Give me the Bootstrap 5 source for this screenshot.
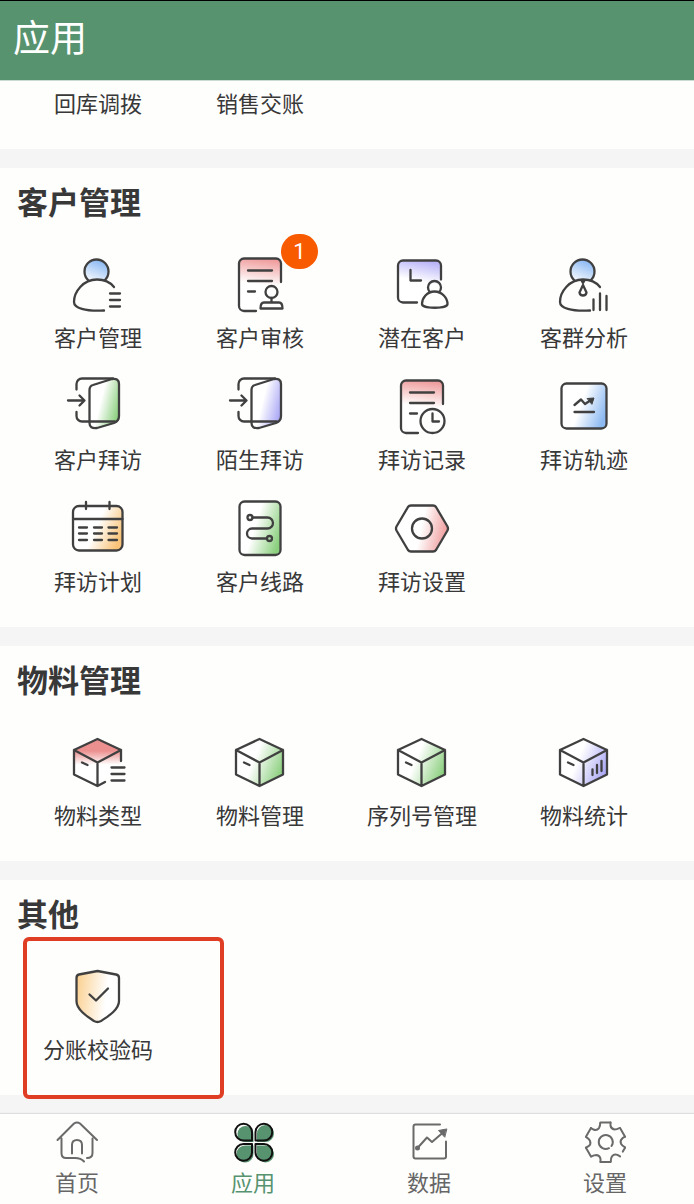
<!DOCTYPE html>
<html lang="zh-CN">
<head>
<meta charset="utf-8">
<meta name="viewport" content="width=device-width, initial-scale=1">
<title>应用</title>
<link href="https://cdn.jsdelivr.net/npm/bootstrap@5.3.0/dist/css/bootstrap.min.css" rel="stylesheet">
<style>
  body { font-family: Roboto, "Noto Sans CJK SC", sans-serif; background: #f5f5f5; color: #383838; }
  .app-header { background: #57936f; border-top: 1px solid #000; border-bottom: 1px solid #c9dcd1; height: 81px; padding: 0 13px 2px; }
  .app-header h1 { font-size: 37px; line-height: 48px; font-weight: 400; }
  .panel { background: #fefefd; padding: 12px 29px 5px 17px; margin-bottom: 19px; }
  .panel-cut { padding-top: 8px; }
  .panel h2 { font-size: 31px; line-height: 48px; font-weight: 700; margin: 0 0 28px; }
  .tile { color: #383838; margin-bottom: 23px; }
  .tile-icon { width: 60px; height: 60px; margin-bottom: 7px; }
  .tile-label { font-size: 22px; line-height: 32px; white-space: nowrap; }
  svg { display: block; overflow: visible; }
  .ico { width: 60px; height: 60px; fill: none; stroke: #404040; stroke-width: 2.3; stroke-linecap: round; stroke-linejoin: round; }
  .count { top: -22px; left: 51px; width: 37px; height: 35px; background: #f85a00; font-size: 22px; font-weight: 400; }
  .highlight { top: 57px; left: 23px; width: 201px; height: 162px; border: 4px solid #e03d25; border-radius: 6px; pointer-events: none; z-index: 2; }
  .tabs { background: #fefefd; height: 90px; padding: 6px 56px 0 44px; box-shadow: 0 -1px 1px #dedede; }
  .tab-link { width: 66px; color: #666; font-size: 22px; line-height: 32px; }
  .tab-link.active { color: #57936f; }
  .tab-link svg { width: 44px; height: 44px; margin-bottom: 4px; fill: none; stroke: #6a6a6a; stroke-width: 2; stroke-linecap: round; stroke-linejoin: round; }
</style>
</head>
<body>

<svg width="0" height="0" class="position-absolute" aria-hidden="true">
  <defs>
    <linearGradient id="blueHead" x1=".7" y1="0" x2=".3" y2="1"><stop offset="0" stop-color="#84b5f2"/><stop offset="1" stop-color="#fff"/></linearGradient>
    <linearGradient id="redTop" x1=".6" y1="0" x2=".5" y2="1"><stop offset="0" stop-color="#ef9a9a"/><stop offset=".5" stop-color="#fff"/></linearGradient>
    <linearGradient id="violetTop" x1=".6" y1="0" x2=".4" y2="1"><stop offset="0" stop-color="#b9b4f8"/><stop offset=".5" stop-color="#fff"/></linearGradient>
    <linearGradient id="greenSide" x1=".4" y1=".4" x2="1" y2=".65"><stop offset="0" stop-color="#fff"/><stop offset="1" stop-color="#8bcf7e"/></linearGradient>
    <linearGradient id="violetSide" x1=".4" y1=".4" x2="1" y2=".65"><stop offset="0" stop-color="#fff"/><stop offset="1" stop-color="#aaa7f5"/></linearGradient>
    <linearGradient id="blueSide" x1=".45" y1=".4" x2="1" y2=".6"><stop offset="0" stop-color="#fff"/><stop offset="1" stop-color="#8dbaf2"/></linearGradient>
    <linearGradient id="orangeSide" x1=".5" y1=".4" x2="1" y2=".6"><stop offset="0" stop-color="#fff"/><stop offset="1" stop-color="#f8c378"/></linearGradient>
    <linearGradient id="redSide" x1=".5" y1=".4" x2="1" y2=".5"><stop offset="0" stop-color="#fff"/><stop offset="1" stop-color="#f09c9c"/></linearGradient>
    <linearGradient id="orangeLeft" x1="0" y1=".4" x2=".7" y2=".5"><stop offset="0" stop-color="#fbd294"/><stop offset="1" stop-color="#fff"/></linearGradient>
    <linearGradient id="redCube" x1=".5" y1="0" x2=".5" y2="1"><stop offset=".25" stop-color="#ec8f8f"/><stop offset=".55" stop-color="#fff"/></linearGradient>
  </defs>
  <symbol id="person" viewBox="0 0 60 60">
    <circle cx="29.500" cy="15.500" r="12" fill="url(#blueHead)"/>
    <path fill="#fefefd" stroke="none" d="M47 31C43 26 37 23.500 30 23.500C16 23.500 7 36 7 46L38 54z"/>
    <path d="M47 31C43 26 37 23.500 30 23.500C16 23.500 7 36 7 46C7 52 18 55.500 37 54.500"/>
  </symbol>
  <symbol id="record" viewBox="0 0 60 60">
    <path stroke="none" fill="url(#redTop)" d="M15 2.500H47a5 5 0 0 1 5 5V26L27 55H15a5 5 0 0 1-5-5V7.500a5 5 0 0 1 5-5z"/>
    <path d="M52 26V7.500a5 5 0 0 0-5-5H15a5 5 0 0 0-5 5V50a5 5 0 0 0 5 5H27M19 14.500H43M19 25H43M19 35.500H26"/>
  </symbol>
  <symbol id="cubeLines" viewBox="0 0 60 60">
    <path d="M30.500 5L54 16V40.500L30.500 52L7 40.500V16zM7 16L30.500 28.500L54 16M30.500 28.500V52M15 28.500L20.500 31"/>
  </symbol>
  <symbol id="doorLines" viewBox="0 0 60 60" overflow="visible">
    <path d="M9.500 11.500V6a5.500 5.500 0 0 1 5.500-5.500H46M9.500 34V38a5.500 5.500 0 0 0 5.500 5.500H48M1 22.500H17M12.500 17.500L17.500 22.500L12.500 27.500"/>
    <path d="M22.500 12Q22.500 8 26 7L45 1Q52 0 52 6V38Q52 43 47 45L30 50Q22.500 51 22.500 45z"/>
  </symbol>
</svg>

<header class="app-header sticky-top d-flex align-items-center text-white">
  <h1 class="mb-0">应用</h1>
</header>

<main>
  <section class="panel panel-cut">
    <div class="row row-cols-4 g-0 text-center">
      <div class="col"><a href="#" class="tile d-block text-decoration-none"><span class="tile-label d-block">回库调拨</span></a></div>
      <div class="col"><a href="#" class="tile d-block text-decoration-none"><span class="tile-label d-block">销售交账</span></a></div>
    </div>
  </section>

  <section class="panel">
    <h2>客户管理</h2>
    <div class="row row-cols-4 g-0">
      <div class="col"><a href="#" class="tile d-flex flex-column align-items-center text-decoration-none">
        <span class="tile-icon"><svg class="ico" viewBox="1 0 60 60"><use href="#person" width="60" height="60"/><path d="M43 37.500H53M43 44H53M43 50.500H53"/></svg></span>
        <span class="tile-label">客户管理</span></a></div>
      <div class="col"><a href="#" class="tile d-flex flex-column align-items-center text-decoration-none">
        <span class="tile-icon position-relative"><svg class="ico" viewBox="1 0 60 60"><use href="#record" width="60" height="60"/><circle cx="42.500" cy="36" r="6"/><path d="M42.500 42V46M35 46.500H50Q53.500 46.500 53.500 52.500H31.500Q31.500 46.500 35 46.500z"/></svg>
          <span class="count badge rounded-pill position-absolute d-flex align-items-center justify-content-center p-0">1</span></span>
        <span class="tile-label">客户审核</span></a></div>
      <div class="col"><a href="#" class="tile d-flex flex-column align-items-center text-decoration-none">
        <span class="tile-icon"><svg class="ico" viewBox="1 0 60 60"><path stroke="none" fill="url(#violetTop)" d="M12 4.500H45a5 5 0 0 1 5 5V24L27 46.500H12a5 5 0 0 1-5-5V9.500a5 5 0 0 1 5-5z"/><path d="M50 23.500V9.500a5 5 0 0 0-5-5H12a5 5 0 0 0-5 5V41.500a5 5 0 0 0 5 5H26M19.500 14V24.500H30"/><circle cx="43.500" cy="31.500" r="6.500"/><path fill="#fefefd" d="M43.500 35.500C36 35.500 31 42 31 48C31 53 56.500 53 56.500 48C56.500 42 51 35.500 43.500 35.500z"/></svg></span>
        <span class="tile-label">潜在客户</span></a></div>
      <div class="col"><a href="#" class="tile d-flex flex-column align-items-center text-decoration-none">
        <span class="tile-icon"><svg class="ico" viewBox="1 0 60 60"><use href="#person" width="60" height="60"/><path fill="#404040" d="M28.500 24.500H31.500L30 27z"/><path d="M30 29L26.500 36.500Q27 39.500 30 39.500Q33 39.500 33.500 36.500z"/><path d="M40.500 43.500V54M47 37.500V54M53.500 40V54"/></svg></span>
        <span class="tile-label">客群分析</span></a></div>

      <div class="col"><a href="#" class="tile d-flex flex-column align-items-center text-decoration-none">
        <span class="tile-icon"><svg class="ico" viewBox="1 0 60 60"><path stroke="none" fill="url(#greenSide)" d="M22.500 12Q22.500 8 26 7L45 1Q52 0 52 6V38Q52 43 47 45L30 50Q22.500 51 22.500 45z"/><use href="#doorLines" width="60" height="60"/></svg></span>
        <span class="tile-label">客户拜访</span></a></div>
      <div class="col"><a href="#" class="tile d-flex flex-column align-items-center text-decoration-none">
        <span class="tile-icon"><svg class="ico" viewBox="1 0 60 60"><path stroke="none" fill="url(#violetSide)" d="M22.500 12Q22.500 8 26 7L45 1Q52 0 52 6V38Q52 43 47 45L30 50Q22.500 51 22.500 45z"/><use href="#doorLines" width="60" height="60"/></svg></span>
        <span class="tile-label">陌生拜访</span></a></div>
      <div class="col"><a href="#" class="tile d-flex flex-column align-items-center text-decoration-none">
        <span class="tile-icon"><svg class="ico" viewBox="1 0 60 60"><use href="#record" width="60" height="60"/><circle cx="41.500" cy="43" r="12" fill="#fefefd"/><path d="M41.500 35.500V43.500H48"/></svg></span>
        <span class="tile-label">拜访记录</span></a></div>
      <div class="col"><a href="#" class="tile d-flex flex-column align-items-center text-decoration-none">
        <span class="tile-icon"><svg class="ico" viewBox="1 0 60 60"><rect x="8.500" y="5.500" width="45" height="45" rx="5" fill="url(#blueSide)"/><path d="M21.500 27L28 21.500L32 26L38 22M21.500 34H41"/><path fill="#404040" stroke-width="1" d="M34.500 20.500L41 20L39 26z"/></svg></span>
        <span class="tile-label">拜访轨迹</span></a></div>

      <div class="col"><a href="#" class="tile d-flex flex-column align-items-center text-decoration-none">
        <span class="tile-icon"><svg class="ico" viewBox="1 0 60 60"><rect x="6" y="6" width="49.500" height="44.500" rx="6" fill="url(#orangeSide)"/><path d="M6 19H55.500M19 2V9M42.500 2V9M12 27.500H20M27 27.500H35M41.500 27.500H50M12 33.500H20M27 33.500H35M41.500 33.500H50M12 40H20M27 40H35M41.500 40H50"/></svg></span>
        <span class="tile-label">拜访计划</span></a></div>
      <div class="col"><a href="#" class="tile d-flex flex-column align-items-center text-decoration-none">
        <span class="tile-icon"><svg class="ico" viewBox="1 0 60 60"><rect x="10.500" y="1.500" width="41" height="53.500" rx="5" fill="url(#greenSide)"/><circle cx="21" cy="17.500" r="2.500"/><circle cx="40.500" cy="38.500" r="2.500"/><path d="M23.500 17.500H38.500a5.500 5.500 0 0 1 0 11H23a5 5 0 0 0 0 10H38"/></svg></span>
        <span class="tile-label">客户线路</span></a></div>
      <div class="col"><a href="#" class="tile d-flex flex-column align-items-center text-decoration-none">
        <span class="tile-icon"><svg class="ico" viewBox="1 0 60 60"><path fill="url(#redSide)" d="M20 5.500H42Q44 5.500 45 7L56.500 26.500Q57.500 28.500 56.500 30.500L45 50Q44 51.500 42 51.500H20Q18 51.500 17 50L5.500 30.500Q4.500 28.500 5.500 26.500L17 7Q18 5.500 20 5.500z"/><circle cx="31" cy="28.500" r="10"/></svg></span>
        <span class="tile-label">拜访设置</span></a></div>
    </div>
  </section>

  <section class="panel">
    <h2>物料管理</h2>
    <div class="row row-cols-4 g-0">
      <div class="col"><a href="#" class="tile d-flex flex-column align-items-center text-decoration-none">
        <span class="tile-icon"><svg class="ico" viewBox="1 0 60 60"><path stroke="none" fill="url(#redCube)" d="M30.500 5L54 16V28L30.500 52L7 40.500V16z"/><path d="M54 27V16L30.500 5L7 16V40.500L30.500 52L38 48M7 16L30.500 28.500L54 16M30.500 28.500V52M15 28.500L20.500 31M44.500 33.500H57.500M44.500 40H57.500M44.500 46.500H57.500"/></svg></span>
        <span class="tile-label">物料类型</span></a></div>
      <div class="col"><a href="#" class="tile d-flex flex-column align-items-center text-decoration-none">
        <span class="tile-icon"><svg class="ico" viewBox="1 0 60 60"><path stroke="none" fill="url(#greenSide)" d="M30.500 5L54 16V40.500L30.500 52L7 40.500V16z"/><use href="#cubeLines" width="60" height="60"/></svg></span>
        <span class="tile-label">物料管理</span></a></div>
      <div class="col"><a href="#" class="tile d-flex flex-column align-items-center text-decoration-none">
        <span class="tile-icon"><svg class="ico" viewBox="1 0 60 60"><path stroke="none" fill="url(#greenSide)" d="M30.500 5L54 16V40.500L30.500 52L7 40.500V16z"/><use href="#cubeLines" width="60" height="60"/></svg></span>
        <span class="tile-label">序列号管理</span></a></div>
      <div class="col"><a href="#" class="tile d-flex flex-column align-items-center text-decoration-none">
        <span class="tile-icon"><svg class="ico" viewBox="1 0 60 60"><path stroke="none" fill="url(#violetSide)" d="M30.500 5L54 16V40.500L30.500 52L7 40.500V16z"/><use href="#cubeLines" width="60" height="60"/><path d="M39.500 35.500V41M44 31V39M48.500 27V37"/></svg></span>
        <span class="tile-label">物料统计</span></a></div>
    </div>
  </section>

  <section class="panel position-relative">
    <h2>其他</h2>
    <div class="row row-cols-4 g-0">
      <div class="col"><a href="#" class="tile d-flex flex-column align-items-center text-decoration-none">
        <span class="tile-icon"><svg class="ico" viewBox="1 0 60 60"><path fill="url(#orangeLeft)" d="M30.500 3L49 6.500Q52 7 52 10V33C52 42 40 49 34 53Q30.500 55 27 53C21 49 9.500 42 9.500 33V10Q9.500 7 12 6.500z"/><path d="M22.500 26.500L29 32.500L41 20.500"/></svg></span>
        <span class="tile-label">分账校验码</span></a></div>
    </div>
    <div class="highlight position-absolute"></div>
  </section>
</main>

<nav class="tabs position-sticky bottom-0 d-flex justify-content-between align-items-start">
  <a href="#" class="tab-link d-flex flex-column align-items-center text-decoration-none">
    <svg viewBox="0 0 44 44"><path d="M2.500 20L19 3.500Q22 1.500 25 3.500L42 20M6.500 18.500V33Q6.500 38 11 38H20Q26 38 29 41.500M37.500 18.500V33Q37.500 38 32 38M17 33.500V25Q17 20 22 20Q27 20 27 25V33.500"/></svg>
    首页</a>
  <a href="#" class="tab-link active d-flex flex-column align-items-center text-decoration-none" aria-current="page">
    <svg viewBox="0 0 44 44">
      <g fill="#57936f" stroke="none"><path d="M22.500 22H14.500A8 8 0 1 1 22.500 14z"/><path d="M26 22V14A8.500 8.500 0 1 1 34 22z"/><path d="M22.500 25.500V33.500A8.500 8.500 0 1 1 14 25.500z"/><path d="M26 25.500H34A8.500 8.500 0 1 1 26 34z"/></g>
      <g stroke="#111"><path d="M21 20.500H12.500A8.400 8.400 0 1 1 21 12z"/><path d="M24.500 20.500V12A8.400 8.400 0 1 1 33 20.500z"/><path d="M21 24V32.500A8.400 8.400 0 1 1 12.500 24z"/><path d="M24.500 24H33A8.400 8.400 0 1 1 24.500 32.500z"/></g>
    </svg>
    应用</a>
  <a href="#" class="tab-link d-flex flex-column align-items-center text-decoration-none">
    <svg viewBox="0 0 44 44"><path d="M33 4.500H8.500Q6.500 4.500 6.500 6.500V36.500Q6.500 38.500 8.500 38.500H37Q39 38.500 39 36.500V21.500M10.500 28L20 17.500L25 22L36 12.500"/><circle cx="10.500" cy="28" r="1.500" fill="#6a6a6a"/><path fill="#6a6a6a" stroke-width="1" d="M39.500 9L31.500 10.500L37.500 17z"/></svg>
    数据</a>
  <a href="#" class="tab-link d-flex flex-column align-items-center text-decoration-none">
    <svg viewBox="0 0 44 44">
      <defs><path id="valley" d="M27.500 2.500V5.500Q28 9 31.500 9.500Q34 9.500 36.500 8"/><path id="tooth" d="M17.500 2.500H27.500"/></defs>
      <use href="#valley"/><use href="#valley" transform="rotate(60 22.500 22.200)"/><use href="#valley" transform="rotate(120 22.500 22.200)"/><use href="#valley" transform="rotate(180 22.500 22.200)"/><use href="#valley" transform="rotate(240 22.500 22.200)"/><use href="#valley" transform="rotate(300 22.500 22.200)"/>
      <use href="#tooth"/><use href="#tooth" transform="rotate(60 22.500 22.200)"/><path d="M17.500 2.500H22" transform="rotate(120 22.500 22.200)"/><use href="#tooth" transform="rotate(180 22.500 22.200)"/><use href="#tooth" transform="rotate(240 22.500 22.200)"/><use href="#tooth" transform="rotate(300 22.500 22.200)"/>
      <path d="M26 28.200A7 7 0 1 1 28.500 26"/>
    </svg>
    设置</a>
</nav>

<script src="https://cdn.jsdelivr.net/npm/bootstrap@5.3.0/dist/js/bootstrap.bundle.min.js"></script>
</body>
</html>
